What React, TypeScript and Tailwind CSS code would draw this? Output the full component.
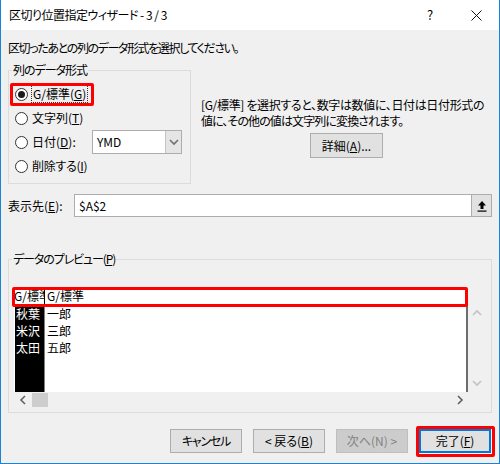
import React from 'react'

function Radio({ checked = false }: { checked?: boolean }) {
  return (
    <span className="w-[13px] h-[13px] rounded-full border border-[#333333] bg-white flex items-center justify-center shrink-0">
      {checked && <span className="w-[7px] h-[7px] rounded-full bg-[#1a1a1a]" />}
    </span>
  )
}

function Chevron({ dir, className }: { dir: 'up' | 'down' | 'left' | 'right'; className?: string }) {
  const pts = {
    up: '1,6 5,2 9,6',
    down: '1,2 5,6 9,2',
    left: '6,1 2,5 6,9',
    right: '2,1 6,5 2,9',
  }[dir]
  const vertical = dir === 'up' || dir === 'down'
  return (
    <svg
      width={vertical ? 10 : 8}
      height={vertical ? 8 : 10}
      viewBox={vertical ? '0 0 10 8' : '0 0 8 10'}
      className={className}
    >
      <polyline points={pts} fill="none" stroke="currentColor" strokeWidth="1.6" />
    </svg>
  )
}

function Btn({ children, disabled = false }: { children: React.ReactNode; disabled?: boolean }) {
  return (
    <div
      className={
        disabled
          ? 'w-[72px] h-[24px] flex items-center justify-center border border-[#bfbfbf] bg-[#cccccc] text-[#838383]'
          : 'w-[72px] h-[24px] flex items-center justify-center border border-[#adadad] bg-[#e1e1e1]'
      }
    >
      {children}
    </div>
  )
}

export default function App() {
  return (
    <div className="w-[500px] h-[464px] flex flex-col bg-[#f0f0f0] border-x border-b border-[#1883d7] text-[12px] leading-[16px] text-black font-['Noto_Sans_CJK_JP',sans-serif] [font-feature-settings:'palt']">
      {/* Title bar */}
      <div className="h-[30px] shrink-0 bg-white flex items-center">
        <span className="flex-1 pl-[8px] tracking-[-0.5px] whitespace-pre">区切り位置指定ウィザード - 3 / 3</span>
        <span className="w-[46px] h-full flex items-center justify-center text-[13px]">?</span>
        <span className="w-[46px] h-full flex items-center justify-center">
          <svg width="11" height="11" viewBox="0 0 11 11">
            <path d="M0.5 0.5 L10.5 10.5 M10.5 0.5 L0.5 10.5" stroke="#111" strokeWidth="1" />
          </svg>
        </span>
      </div>

      <div className="flex-1 flex flex-col px-[7px]">
        <p className="mt-[10px] tracking-[-1.4px]">区切ったあとの列のデータ形式を選択してください。</p>

        <div className="flex mt-[6px]">
          {/* 列のデータ形式 */}
          <fieldset className="w-[183px] h-[122px] border border-[#dcdcdc] pl-[6px] pt-[4px]">
            <legend className="ml-[-3px] px-[1px] tracking-[-1px]">列のデータ形式</legend>
            <div className="flex flex-col">
              <div className="relative h-[24px] flex items-center">
                <Radio checked />
                <span className="ml-[4px] px-[1px] outline outline-1 outline-dotted outline-[#333]">
                  G/標準(<u>G</u>)
                </span>
                <span className="absolute left-[-5px] top-[1px] w-[84px] h-[23px] border-[3px] border-[#ff0000] rounded-[2px]" />
              </div>
              <div className="h-[24px] flex items-center">
                <Radio />
                <span className="ml-[4px]">
                  文字列(<u>T</u>)
                </span>
              </div>
              <div className="h-[24px] flex items-center">
                <Radio />
                <span className="ml-[4px] w-[60px]">
                  日付(<u>D</u>):
                </span>
                <div className="w-[90px] h-[24px] flex border border-[#adadad] bg-white">
                  <span className="flex-1 flex items-center pl-[4px]">YMD</span>
                  <span className="w-[16px] flex items-center justify-center bg-[#e5e5e5] border-l border-[#c4c4c4] text-[#707070]">
                    <Chevron dir="down" />
                  </span>
                </div>
              </div>
              <div className="h-[24px] flex items-center">
                <Radio />
                <span className="ml-[4px] tracking-[-0.3px]">
                  削除する(<u>I</u>)
                </span>
              </div>
            </div>
          </fieldset>

          {/* description */}
          <div className="flex-1 ml-[10px] pt-[35px] flex flex-col items-center">
            <div className="self-start whitespace-nowrap leading-[16px]">
              <div className="tracking-[-0.35px]">[G/標準] を選択すると、数字は数値に、日付は日付形式の</div>
              <div className="tracking-[-0.9px]">値に、その他の値は文字列に変換されます。</div>
            </div>
            <div className="mt-[4px] w-[73px] h-[25px] flex items-center justify-center border border-[#adadad] bg-[#e1e1e1]">
              詳細(<u>A</u>)...
            </div>
          </div>
        </div>

        {/* 表示先 */}
        <div className="mt-[10px] h-[23px] flex items-center">
          <span className="w-[66px]">
            表示先(<u>E</u>):
          </span>
          <div className="flex-1 h-full flex border border-[#adadad] bg-white">
            <span className="flex-1 flex items-center pl-[4px]">$A$2</span>
            <span className="w-[20px] flex items-center justify-center bg-[#e1e1e1] border-l border-[#adadad]">
              <svg width="10" height="12" viewBox="0 0 10 12">
                <path d="M5 1 L9 5.5 L6.5 5.5 L6.5 9 L3.5 9 L3.5 5.5 L1 5.5 Z" fill="#000" />
                <rect x="0.5" y="10.5" width="9" height="1.2" fill="#000" />
              </svg>
            </span>
          </div>
        </div>

        {/* データのプレビュー */}
        <fieldset className="mt-[34px] h-[162px] border border-[#dcdcdc] pl-[5px] pt-[21px]">
          <legend className="ml-[-2px] px-[1px] tracking-[-1.1px]">
            データのプレビュー(<u>P</u>)
          </legend>
          <div className="w-[472px] flex flex-col">
            {/* header row */}
            <div className="relative w-[454px] h-[17px] flex bg-white border-b border-black leading-[16px]">
              <span className="w-[31px] overflow-hidden whitespace-nowrap border-r border-black">G/標準</span>
              <span className="pl-[2px] whitespace-nowrap">G/標準</span>
              <span className="absolute left-[-2px] top-[-1px] w-[456px] h-[20px] border-[3px] border-[#ff0000] rounded-[2px]" />
            </div>
            {/* data */}
            <div className="h-[87px] flex">
              <div className="w-[454px] flex bg-white border-r-2 border-[#6d6d6d] leading-[17px]">
                <div className="w-[31px] pl-[1px] border-r border-[#808080]">
                  <div className="h-full bg-black text-white pl-[1px]">
                    <div>秋葉</div>
                    <div>米沢</div>
                    <div>太田</div>
                  </div>
                </div>
                <div className="pl-[2px]">
                  <div>一郎</div>
                  <div>三郎</div>
                  <div>五郎</div>
                </div>
              </div>
              <div className="w-[18px] flex flex-col items-center justify-between pt-[4px] pb-[5px] text-[#c2c2c2]">
                <Chevron dir="up" />
                <Chevron dir="down" />
              </div>
            </div>
            {/* horizontal scrollbar */}
            <div className="w-[454px] h-[16px] flex items-center text-[#606060]">
              <Chevron dir="left" className="ml-[5px]" />
              <span className="ml-[5px] w-[16px] h-[14px] bg-[#cdcdcd]" />
              <Chevron dir="right" className="ml-auto mr-[4px]" />
            </div>
          </div>
        </fieldset>

        {/* buttons */}
        <div className="mt-[16px] flex justify-end gap-[11px] pr-[1px]">
          <Btn>
            <span className="tracking-[-1.2px]">キャンセル</span>
          </Btn>
          <Btn>
            &lt; 戻る(<u>B</u>)
          </Btn>
          <Btn disabled>次へ(N) &gt;</Btn>
          <div className="relative">
            <div className="w-[72px] h-[24px] flex items-center justify-center border-2 border-[#0078d7] bg-[#e1e1e1]">
              完了(<u>F</u>)
            </div>
            <span className="absolute left-[-3px] top-[-3px] w-[79px] h-[31px] border-[3px] border-[#ff0000] rounded-[2px]" />
          </div>
        </div>
      </div>
    </div>
  )
}
